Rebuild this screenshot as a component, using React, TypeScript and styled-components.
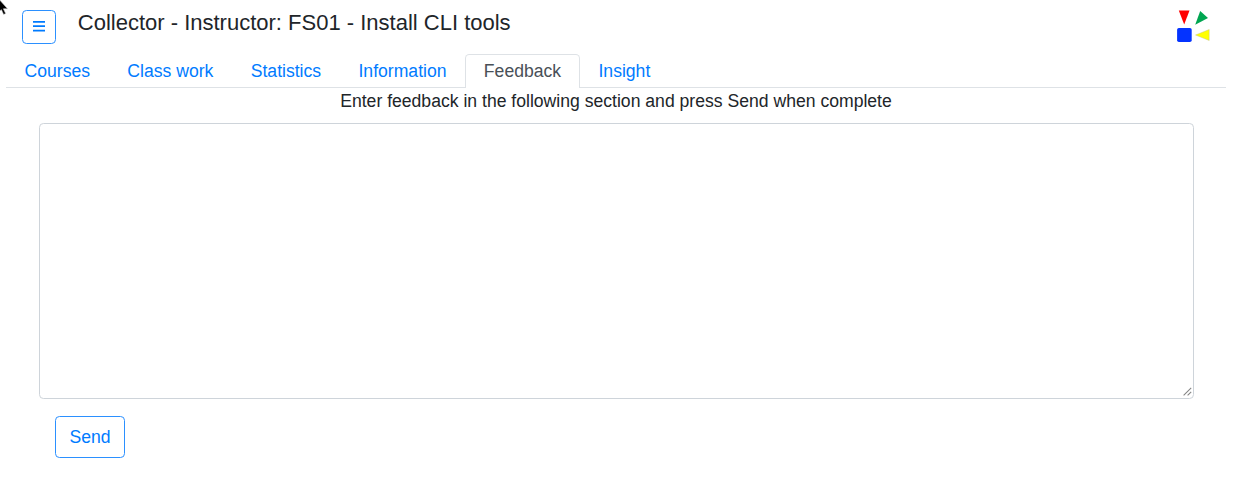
import React from "react";
import styled, { createGlobalStyle } from "styled-components";

const GlobalStyle = createGlobalStyle`
  *, *::before, *::after { box-sizing: border-box; }
  body {
    margin: 0;
    background: #fff;
    color: #212529;
    font-family: "Liberation Sans", Arial, sans-serif;
    font-size: 17.6px;
    line-height: 26px;
    overflow: hidden;
  }
`;

const Page = styled.div`
  position: relative;
  height: 483px;
  padding: 0 9px 0 6px;
`;

const Pointer = styled.svg`
  position: absolute;
  left: 0;
  top: 0;
`;

const Header = styled.header`
  display: flex;
  align-items: flex-start;
  height: 54px;
  padding: 10px 16px 0;
`;

const OutlineButton = styled.button<{ $square?: boolean }>`
  display: flex;
  align-items: center;
  justify-content: center;
  width: ${(p) => (p.$square ? "34px" : "70px")};
  height: ${(p) => (p.$square ? "34px" : "42px")};
  padding: 0;
  border: 1px solid #2b90ff;
  border-radius: 4.4px;
  background: #fff;
  color: #007bff;
  font: inherit;
`;

const Title = styled.h1`
  flex: 1;
  margin: 0 0 0 21.8px;
  font-size: 22px;
  font-weight: 400;
  line-height: 26px;
`;

const Tabs = styled.nav`
  display: flex;
  height: 34px;
  border-bottom: 1px solid #dee2e6;
`;

const Tab = styled.a<{ $active?: boolean }>`
  height: 34px;
  padding: 3px 17.85px 0 17.5px;
  border: 1px solid ${(p) => (p.$active ? "#dee2e6" : "transparent")};
  border-bottom: 0;
  border-radius: 4.4px 4.4px 0 0;
  background: ${(p) => (p.$active ? "#fff" : "transparent")};
  color: ${(p) => (p.$active ? "#495057" : "#007bff")};
  text-decoration: none;
  white-space: nowrap;
`;

const Prompt = styled.p`
  margin: 0;
  height: 35px;
  text-align: center;
`;

const FeedbackForm = styled.form`
  padding: 0 33px;
`;

const BoxFrame = styled.div`
  position: relative;
  width: 1155px;
`;

const FeedbackBox = styled.textarea`
  display: block;
  width: 100%;
  height: 276px;
  border: 1px solid #ced4da;
  border-radius: 4.4px;
  background: #fff;
  resize: none;
  outline: 0;
`;

const ResizeGrip = styled.svg`
  position: absolute;
  right: 2px;
  bottom: 3px;
`;

const Actions = styled.div`
  padding: 17px 16px 0;
`;

const tabs = ["Courses", "Class work", "Statistics", "Information", "Feedback", "Insight"];

export default function App() {
  return (
    <Page>
      <GlobalStyle />
      <Header>
        <OutlineButton $square aria-label="Menu">
          <svg width="12" height="12" viewBox="0 0 12 12" stroke="#007bff" strokeWidth="1.8">
            <path d="M0 .9H12M0 5.2H12M0 9.6H12" />
          </svg>
        </OutlineButton>
        <Title>Collector - Instructor: FS01 - Install CLI tools</Title>
        <svg width="34" height="34" viewBox="0 0 34 34">
          <path d="M2.8 .5H13.5L8.2 14.5Z" fill="#f00" />
          <path d="M24.2 1L32 8L19.2 14.8Z" fill="#00a651" />
          <path d="M19.5 25L33.2 19.5V30.5Z" fill="#ff0" stroke="#bdbd8a" strokeWidth=".4" />
          <rect x="1.1" y="18" width="14.6" height="14" rx="1.8" fill="#0433ff" />
        </svg>
      </Header>
      <Tabs>
        {tabs.map((name) => (
          <Tab key={name} $active={name === "Feedback"}>{name}</Tab>
        ))}
      </Tabs>
      <Prompt>Enter feedback in the following section and press Send when complete</Prompt>
      <FeedbackForm>
        <BoxFrame>
          <FeedbackBox aria-label="Feedback" />
          <ResizeGrip width="9" height="9" viewBox="0 0 9 9" stroke="#858585" strokeWidth="1.1">
            <path d="M.6 8.4L8.2 .8M4.6 8.4L8.2 4.8" />
          </ResizeGrip>
        </BoxFrame>
        <Actions>
          <OutlineButton type="button">Send</OutlineButton>
        </Actions>
      </FeedbackForm>
      <Pointer width="10" height="16" viewBox="0 0 10 16">
        <path d="M-3 -3L7.6 8.8H3.4L5.7 13.6L3.6 14.5L1.4 9.7L-3 13Z" fill="#000" stroke="#ddd" strokeWidth=".6" />
      </Pointer>
    </Page>
  );
}
